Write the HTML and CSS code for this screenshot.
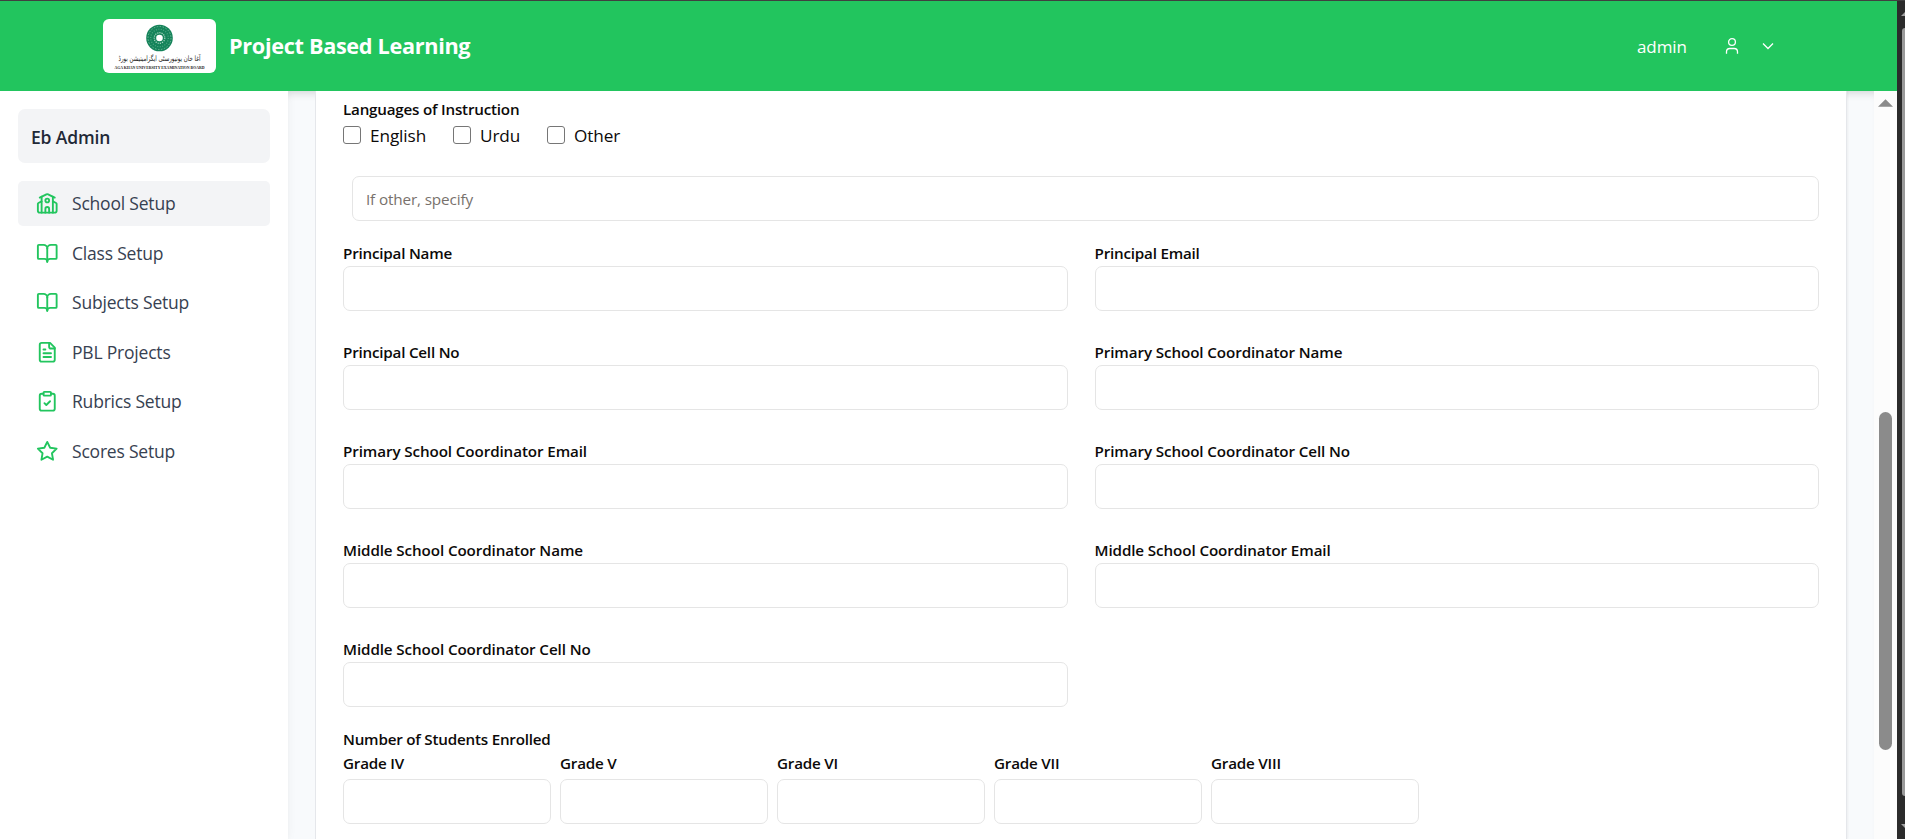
FILE: index.html
```html
<!DOCTYPE html>
<html lang="en">
<head>
<meta charset="utf-8">
<title>Project Based Learning</title>
<link rel="stylesheet" href="styles.css">
</head>
<body>
<div class="window">
  <div class="app">
    <header class="header">
      <svg class="logo" viewBox="0 0 113 54">
        <circle cx="56.500" cy="19" r="13.300" fill="#15835a"/>
        <circle cx="56.500" cy="19" r="11.500" fill="none" stroke="#6fb898" stroke-width="1" stroke-dasharray="1.500 1.500"/>
        <circle cx="56.500" cy="19" r="8.800" fill="none" stroke="#4fa883" stroke-width="1.200" stroke-dasharray="1 1.500"/>
        <circle cx="56.500" cy="19" r="5.300" fill="none" stroke="#a5d5bf" stroke-width="1.200" stroke-dasharray="1.200 1"/>
        <circle cx="56.500" cy="19" r="3.300" fill="#fff"/>
        <text class="logo-urdu" x="56.500" y="41.500" text-anchor="middle" direction="rtl" textLength="82" lengthAdjust="spacingAndGlyphs">آغا خان یونیورسٹی ایگزامینیشن بورڈ</text>
        <text class="logo-latin" x="11.500" y="50" textLength="90" lengthAdjust="spacingAndGlyphs">AGA KHAN UNIVERSITY EXAMINATION BOARD</text>
      </svg>
      <h1 class="title">Project Based Learning</h1>
      <div class="account">
        <span class="user-name">admin</span>
        <svg class="user-icon" viewBox="0 0 14 18"><circle cx="7" cy="5" r="3.400"/><path d="M1.500 16.800v-2a3.300 3.300 0 0 1 3.300-3.300h4.400a3.300 3.300 0 0 1 3.300 3.300v2"/></svg>
        <svg class="chevron" viewBox="0 0 12 8"><path d="m1 1.500 5 5 5-5"/></svg>
      </div>
    </header>
    <div class="body">
      <aside class="sidebar">
        <div class="role">Eb Admin</div>
        <nav class="nav">
          <a class="item active"><svg class="icon" viewBox="0 0 24 24"><path d="M14 22v-4a2 2 0 1 0-4 0v4"/><path d="m18 10 3.447 1.724a1 1 0 0 1 .553.894V20a2 2 0 0 1-2 2H4a2 2 0 0 1-2-2v-7.382a1 1 0 0 1 .553-.894L6 10"/><path d="M18 5v17"/><path d="m4 6 7.106-3.553a2 2 0 0 1 1.788 0L20 6"/><path d="M6 5v17"/><circle cx="12" cy="9" r="2"/></svg><span>School Setup</span></a>
          <a class="item"><svg class="icon" viewBox="0 0 24 24"><path d="M12 7v14"/><path d="M3 18a1 1 0 0 1-1-1V4a1 1 0 0 1 1-1h5a4 4 0 0 1 4 4 4 4 0 0 1 4-4h5a1 1 0 0 1 1 1v13a1 1 0 0 1-1 1h-6a3 3 0 0 0-3 3 3 3 0 0 0-3-3z"/></svg><span>Class Setup</span></a>
          <a class="item"><svg class="icon" viewBox="0 0 24 24"><path d="M12 7v14"/><path d="M3 18a1 1 0 0 1-1-1V4a1 1 0 0 1 1-1h5a4 4 0 0 1 4 4 4 4 0 0 1 4-4h5a1 1 0 0 1 1 1v13a1 1 0 0 1-1 1h-6a3 3 0 0 0-3 3 3 3 0 0 0-3-3z"/></svg><span>Subjects Setup</span></a>
          <a class="item"><svg class="icon" viewBox="0 0 24 24"><path d="M15 2H6a2 2 0 0 0-2 2v16a2 2 0 0 0 2 2h12a2 2 0 0 0 2-2V7Z"/><path d="M14 2v4a2 2 0 0 0 2 2h4"/><path d="M10 9H8M16 13H8M16 17H8"/></svg><span>PBL Projects</span></a>
          <a class="item"><svg class="icon" viewBox="0 0 24 24"><rect width="8" height="4" x="8" y="2" rx="1"/><path d="M16 4h2a2 2 0 0 1 2 2v14a2 2 0 0 1-2 2H6a2 2 0 0 1-2-2V6a2 2 0 0 1 2-2h2"/><path d="m9 14 2 2 4-4"/></svg><span>Rubrics Setup</span></a>
          <a class="item"><svg class="icon" viewBox="0 0 24 24"><path d="M12 2l3.090 6.260L22 9.270l-5 4.870 1.180 6.880L12 17.770l-6.180 3.250L7 14.140 2 9.270l6.910-1.010z"/></svg><span>Scores Setup</span></a>
        </nav>
      </aside>
      <main class="main">
        <form class="card">
          <div class="label">Languages of Instruction</div>
          <div class="checks">
            <label class="check check-english"><input type="checkbox" class="box"><span>English</span></label>
            <label class="check check-urdu"><input type="checkbox" class="box"><span>Urdu</span></label>
            <label class="check"><input type="checkbox" class="box"><span>Other</span></label>
          </div>
          <input class="input other" placeholder="If other, specify">
          <div class="fields">
            <label class="field"><span class="label">Principal Name</span><input class="input"></label>
            <label class="field"><span class="label">Principal Email</span><input class="input"></label>
            <label class="field"><span class="label">Principal Cell No</span><input class="input"></label>
            <label class="field"><span class="label long">Primary School Coordinator Name</span><input class="input"></label>
            <label class="field"><span class="label long">Primary School Coordinator Email</span><input class="input"></label>
            <label class="field"><span class="label long">Primary School Coordinator Cell No</span><input class="input"></label>
            <label class="field"><span class="label long">Middle School Coordinator Name</span><input class="input"></label>
            <label class="field"><span class="label long">Middle School Coordinator Email</span><input class="input"></label>
            <label class="field"><span class="label long">Middle School Coordinator Cell No</span><input class="input"></label>
          </div>
          <div class="label enrolled">Number of Students Enrolled</div>
          <div class="grades">
            <label class="grade"><span class="label">Grade IV</span><input class="input"></label>
            <label class="grade"><span class="label">Grade V</span><input class="input"></label>
            <label class="grade"><span class="label">Grade VI</span><input class="input"></label>
            <label class="grade"><span class="label">Grade VII</span><input class="input"></label>
            <label class="grade"><span class="label">Grade VIII</span><input class="input"></label>
          </div>
        </form>
      </main>
      <div class="scrollbar">
        <svg class="arrow" viewBox="0 0 16 8"><path d="M8 0l8 8H0z"/></svg>
        <div class="thumb"></div>
      </div>
    </div>
  </div>
  <div class="outer-scroll">
    <svg class="outer-arrow" viewBox="0 0 4 4"><path d="M4 0v4H0z"/></svg>
    <div class="outer-thumb"></div>
    <svg class="outer-arrow" viewBox="0 0 4 4"><path d="M4 4V0H0z"/></svg>
  </div>
</div>
</body>
</html>
```
FILE: styles.css
```css
* { box-sizing: border-box; }
body {
  margin: 0;
  height: 839px;
  overflow: hidden;
  font-family: "Open Sans", "Noto Sans", sans-serif;
  font-size: 17px;
  color: #0c0a09;
}
.window { display: flex; height: 839px; border-top: 1px solid #404040; background: #2b2b2b; }
.app { width: 1897px; display: flex; flex-direction: column; background: #f8fafc; }
.header {
  flex: none;
  position: relative;
  z-index: 2;
  height: 90px;
  padding: 0 123px 0 103px;
  display: flex;
  align-items: center;
  background: #22c55e;
  color: #fff;
}
.logo { width: 113px; height: 54px; background: #fff; border-radius: 6px; overflow: visible; }
.logo-urdu { font: 7.500px "DejaVu Sans", sans-serif; fill: #222; }
.logo-latin { font: bold 4px "Liberation Serif", serif; fill: #222; }
.title { margin: 0 0 0 13px; padding-bottom: 1px; font-size: 21.700px; line-height: 30px; font-weight: 700; letter-spacing: -0.330px; white-space: nowrap; }
.account { margin-left: auto; display: flex; align-items: center; }
.user-name { width: 88px; letter-spacing: -0.100px; }
.user-icon { width: 14px; height: 18px; fill: none; stroke: #fff; stroke-width: 1.300; }
.chevron { width: 12px; height: 8px; margin-left: 23px; fill: none; stroke: #fff; stroke-width: 1.300; }
.body { flex: 1; display: flex; min-height: 0; }
.sidebar {
  width: 288px;
  padding: 18px;
  background: #fff;
  box-shadow: 0 0 9px rgba(0, 0, 0, 0.050);
}
.role {
  height: 54px;
  padding-left: 13px;
  line-height: 56px;
  border-radius: 7px;
  background: #f3f4f6;
  color: #1f2937;
  font-weight: 600;
  font-size: 17.500px;
  letter-spacing: -0.150px;
}
.nav { margin-top: 18px; display: flex; flex-direction: column; gap: 4.500px; }
.item {
  height: 45px;
  padding-left: 18px;
  display: flex;
  align-items: center;
  gap: 13.500px;
  border-radius: 5px;
  color: #374151;
  font-size: 17.500px;
  letter-spacing: -0.200px;
}
.item span { padding-bottom: 1px; }
.item.active { background: #f3f4f6; }
.icon { width: 22.500px; height: 22.500px; fill: none; stroke: #22c55e; stroke-width: 2; stroke-linecap: round; stroke-linejoin: round; }
.main { flex: 1; padding: 0 27px; box-shadow: inset 0 8px 8px -6px rgba(0, 0, 0, 0.150); }
.card {
  height: 100%;
  padding: 7px 27px 0 27px;
  border: solid #e5e7eb;
  border-width: 0 1px;
  background: #fff;
  box-shadow: 1px 0 2px rgba(0, 0, 0, 0.050);
}
.label { display: block; font-size: 15.200px; line-height: 22px; font-weight: 600; letter-spacing: -0.210px; white-space: nowrap; }
.label.long { letter-spacing: -0.100px; }
.checks { height: 18px; margin-top: 6px; display: flex; align-items: center; font-size: 17.200px; letter-spacing: -0.100px; }
.check { display: flex; align-items: center; gap: 9px; }
.check-english { width: 110px; }
.check-urdu { width: 94px; }
.box { appearance: none; width: 18px; height: 18px; margin: 0; border: 1px solid #767676; border-radius: 3px; background: #fff; }
.input {
  display: block;
  width: 100%;
  height: 45px;
  padding: 0 13px;
  border: 1px solid #e5e5e5;
  border-radius: 7px;
  background: #fff;
  font: 15.300px "Open Sans", "Noto Sans", sans-serif;
  letter-spacing: -0.150px;
}
.input::placeholder { color: #78716c; opacity: 1; }
.other { width: auto; min-width: calc(100% - 9px); margin: 32px 0 0 9px; }
.fields { margin-top: 21px; display: grid; grid-template-columns: 1fr 1fr; column-gap: 27px; row-gap: 30px; }
.field .label { margin-bottom: 2px; }
.enrolled { margin-top: 21px; }
.grades { margin-top: 2px; display: flex; gap: 9px; }
.grade { width: 208px; }
.grade .label { margin-bottom: 5px; }
.scrollbar { width: 23px; padding-top: 8px; background: #fcfcfc; display: flex; flex-direction: column; align-items: center; }
.arrow { width: 15px; height: 8px; fill: #8b8b8b; }
.thumb { width: 13px; height: 338px; margin-top: 305px; border-radius: 7px; background: #8b8b8b; }
.outer-scroll { width: 8px; padding-top: 11px; display: flex; flex-direction: column; align-items: flex-end; overflow: hidden; }
.outer-arrow { width: 4px; height: 4px; fill: #a0a0a0; }
.outer-thumb { width: 3px; height: 768px; margin: 12px 0 28px; border-radius: 3px 0 0 3px; background: #9a9a9a; }
```
